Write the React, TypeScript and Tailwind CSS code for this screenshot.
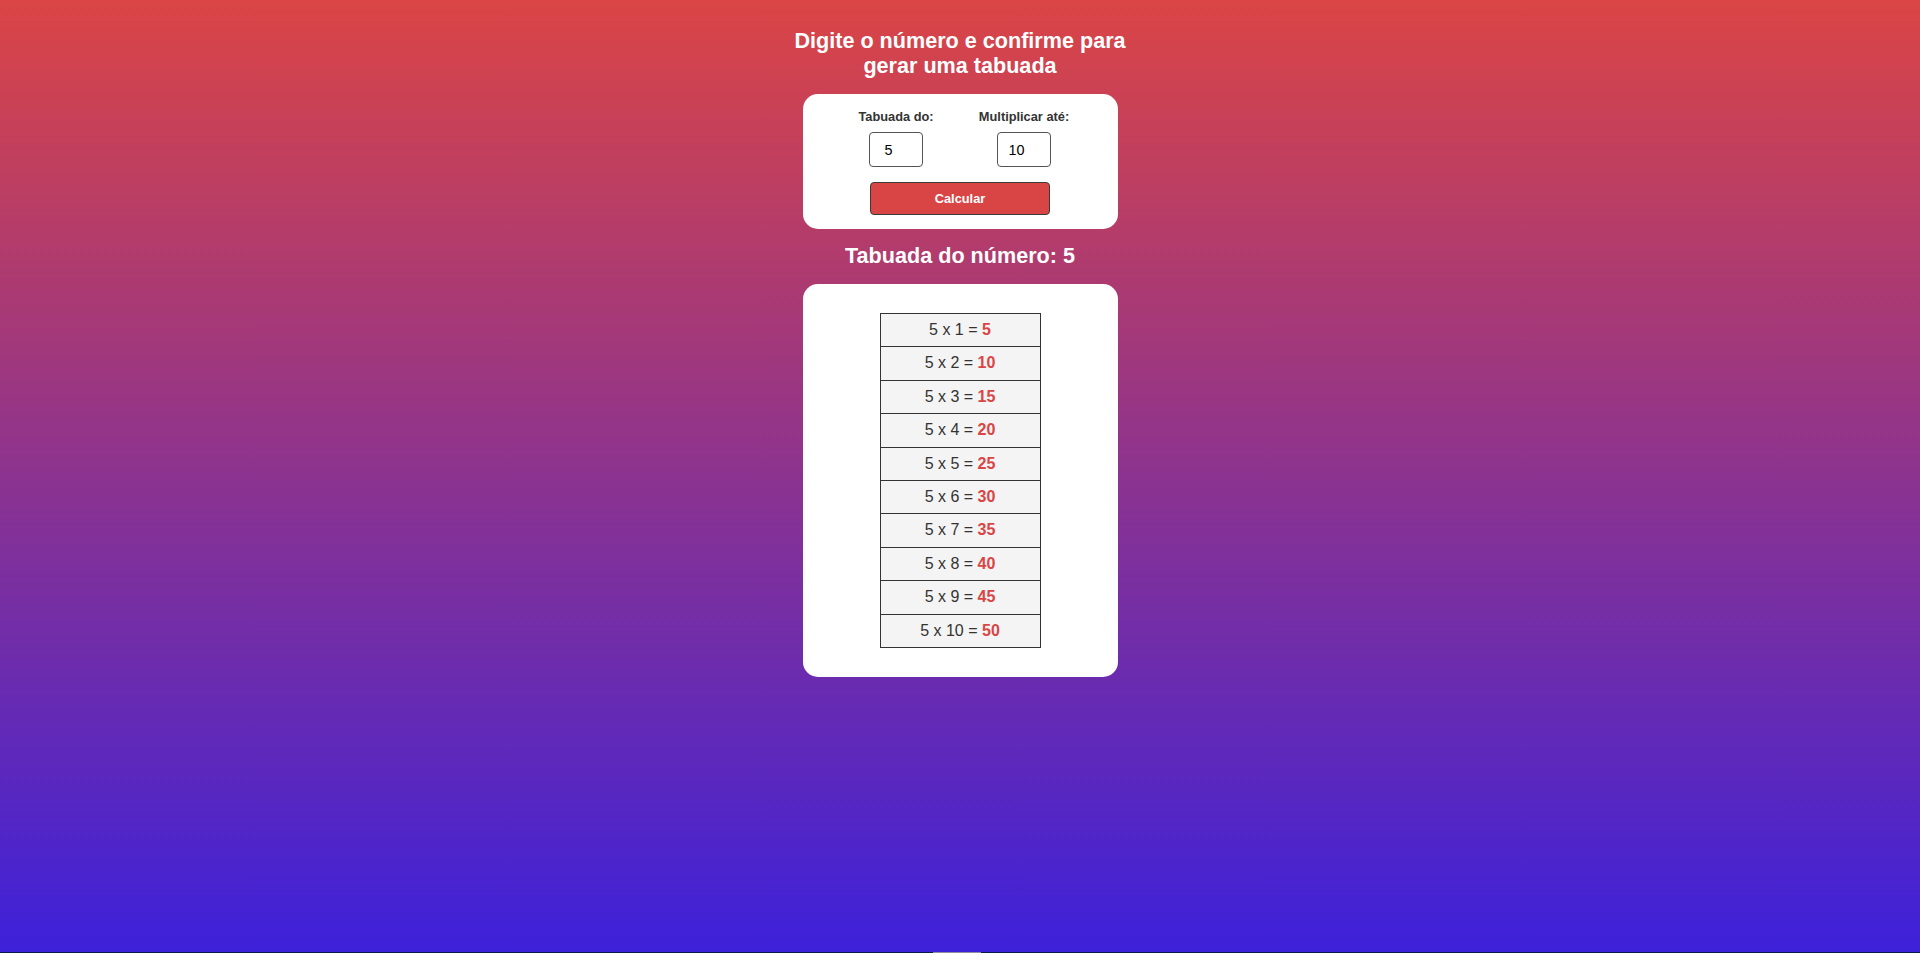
import { useState } from "react";

const FONT = "font-['Liberation_Sans',Arial,sans-serif]";

export default function App() {
  const [numero, setNumero] = useState("5");
  const [limite, setLimite] = useState("10");
  const [tabuada, setTabuada] = useState({ n: 5, ate: 10 });

  const calcular = () => {
    const n = parseInt(numero, 10) || 0;
    const ate = parseInt(limite, 10) || 0;
    setTabuada({ n, ate });
  };

  const linhas = Array.from({ length: tabuada.ate }, (_, i) => i + 1);

  return (
    <div className={`${FONT} flex h-[953px] flex-col overflow-hidden`}>
      <main className="flex h-[952px] flex-col items-center bg-[linear-gradient(to_bottom,#db4545,#3d21da)] pt-[28px]">
        <h2 className="text-center text-[21.6px] font-bold leading-[25px] text-white">
          Digite o número e confirme para
          <br />
          gerar uma tabuada
        </h2>

        {/* formulário */}
        <div className="mt-[16px] flex w-[315px] flex-col items-center rounded-[15px] bg-white pt-[15px] pb-[14px]">
          <div className="flex gap-[28px]">
            <label className="flex w-[100px] flex-col items-center gap-[8px]">
              <span className="text-[12.8px] font-bold leading-[15px] text-[#333]">
                Tabuada do:
              </span>
              <input
                type="number"
                value={numero}
                onChange={(e) => setNumero(e.target.value)}
                className="h-[35px] w-[54px] rounded-[4px] border border-[#555] bg-white text-center text-[14.4px] font-normal text-black outline-none"
              />
            </label>
            <label className="flex w-[100px] flex-col items-center gap-[8px]">
              <span className="text-[12.8px] font-bold leading-[15px] text-[#333]">
                Multiplicar até:
              </span>
              <input
                type="number"
                value={limite}
                onChange={(e) => setLimite(e.target.value)}
                className="h-[35px] w-[54px] rounded-[4px] border border-[#555] bg-white text-center text-[14.4px] font-normal text-black outline-none"
              />
            </label>
          </div>
          <button
            onClick={calcular}
            className="mt-[15px] h-[33px] w-[180px] rounded-[4px] border border-[#3a3a3a] bg-[#d94545] text-[12.8px] font-bold text-white"
          >
            Calcular
          </button>
        </div>

        <h2 className="mt-[14px] text-center text-[21.6px] font-bold leading-[25px] text-white">
          Tabuada do número: {tabuada.n}
        </h2>

        {/* resultado */}
        <div className="mt-[16px] flex w-[315px] justify-center rounded-[15px] bg-white py-[29px]">
          <table className="w-[161px] border-collapse">
            <tbody>
              {linhas.map((i) => (
                <tr key={i}>
                  <td className="border border-[#333] bg-[#f4f4f4] py-[7px] text-center text-[16px] leading-[18.4px] text-[#333]">
                    {tabuada.n} x {i} ={" "}
                    <span className="font-bold text-[#d94545]">{tabuada.n * i}</span>
                  </td>
                </tr>
              ))}
            </tbody>
          </table>
        </div>
      </main>
      <div className="flex h-px bg-[#0b1a44]">
        <div className="ml-[933px] w-[48px] bg-[#8f8f9f]" />
      </div>
    </div>
  );
}
